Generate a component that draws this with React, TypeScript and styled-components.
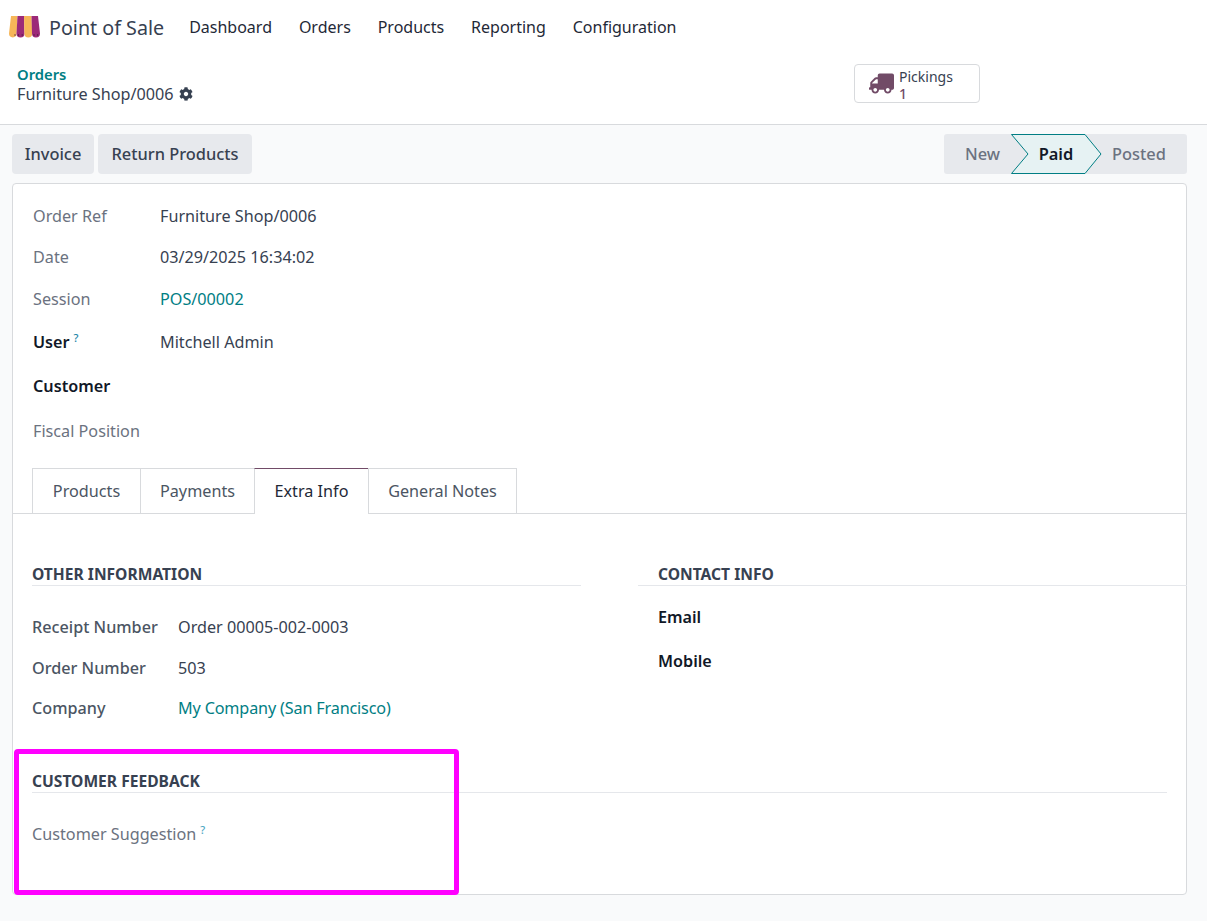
import React from "react";
import styled, { createGlobalStyle } from "styled-components";
import { FaCog, FaTruck } from "react-icons/fa";

const Global = createGlobalStyle`
  html, body { margin: 0; padding: 0; }
  body { background: #f9fafb; font-family: "Noto Sans", "Open Sans", sans-serif; font-size: 16.2px; color: #374151; }
`;
const Page = styled.div`position: relative; width: 1207px; height: 921px; overflow: hidden;`;
const Navbar = styled.nav`display: flex; align-items: center; height: 54px; padding-left: 9px; background: #fff;`;
const Brand = styled.div`display: flex; align-items: center; gap: 7px; font-size: 19.7px; color: #374151; margin-right: 25px;`;
const NavItems = styled.div`display: flex; gap: 26.9px;`;
const NavItem = styled.span`font-size: 16px; color: #1f2937;`;
const Panel = styled.div`display: flex; height: 70px; background: #fff; border-bottom: 1px solid #d8dadd; box-sizing: content-box;`;
const Crumbs = styled.div`width: 854px; padding: 11px 0 0 17px; box-sizing: border-box;`;
const CrumbLink = styled.div`font-size: 14.8px; line-height: 19px; font-weight: 600; color: #017e84;`;
const CrumbCurrent = styled.div`display: flex; align-items: center; gap: 5px; line-height: 20px; color: #374151;`;
const StatButton = styled.div`display: flex; align-items: center; gap: 5px; margin-top: 10px; width: 126px; height: 39px; padding-left: 14px; box-sizing: border-box; border: 1px solid #d8dadd; border-radius: 4px; background: #fff; color: #374151; font-size: 14px;`;
const StatText = styled.div`display: flex; flex-direction: column; margin-top: 2px;`;
const StatLabel = styled.span`display: block; height: 17px; line-height: 17px;`;
const StatValue = styled(StatLabel)`font-weight: 500; color: #714b67;`;
const ActionBar = styled.div`display: flex; justify-content: space-between; padding: 9px 20px 9px 12px;`;
const Actions = styled.div`display: flex; gap: 4px;`;
const ActionButton = styled.div<{ $w: number }>`width: ${p => p.$w}px; height: 40px; box-sizing: border-box; padding-bottom: 2px; display: flex; align-items: center; justify-content: center; background: #e7e9ed; border-radius: 4px; font-size: 16.4px; font-weight: 500; color: #374151;`;
const StatusBar = styled.div`display: flex; height: 40px; width: 243px; background: #e7e9ed; border-radius: 3px; font-weight: 500; font-size: 16.4px; color: #6b7280;`;
const Step = styled.div<{ $w: number; $active?: boolean; $padL?: number; $padR?: number }>`position: relative; width: ${p => p.$w}px; box-sizing: border-box; padding: 0 ${p => p.$padR ?? 0}px 2px ${p => p.$padL ?? 0}px; display: flex; align-items: center; justify-content: center; color: ${p => p.$active ? "#111827" : "#6b7280"}; font-weight: ${p => p.$active ? 600 : 500};`;
const StepLabel = styled.span`position: relative;`;
const StepShape = styled.svg`position: absolute; left: 0; top: 0;`;
const Sheet = styled.div`margin: 0 20px 0 12px; height: 712px; box-sizing: border-box; background: #fff; border: 1px solid #d8dadd; border-radius: 4px;`;
const Header = styled.div`padding: 11px 20px 0;`;
const Row = styled.div<{ $h: number }>`display: flex; align-items: center; height: ${p => p.$h}px;`;
const Label = styled.div<{ $w?: number; $strong?: boolean; $bold?: boolean }>`width: ${p => p.$w ?? 127}px; flex: none; color: ${p => p.$strong ? "#111827" : p.$bold ? "#4b5563" : "#6b7280"}; font-weight: ${p => p.$strong ? 600 : p.$bold ? 500 : 400};`;
const Help = styled.sup<{ $light?: boolean }>`font-size: 11px; font-weight: 500; color: ${p => p.$light ? "#4fa8c4" : "#1b84a8"}; margin-left: 4px; vertical-align: 6px; line-height: 0;`;
const Value = styled.div`color: #374151;`;
const ValueLink = styled.div<{ $tight?: boolean }>`color: #017e84; letter-spacing: ${p => p.$tight ? "-0.16px" : "0"};`;
const Tabs = styled.div`display: flex; margin-top: 15px; padding-left: 20px; height: 46px; box-sizing: border-box; border-bottom: 1px solid #d8dadd;`;
const Tab = styled.div<{ $w: number; $active?: boolean }>`width: ${p => p.$w}px; height: ${p => p.$active ? 46 : 45}px; padding-bottom: ${p => p.$active ? 1 : 0}px; box-sizing: border-box; display: flex; align-items: center; justify-content: center; background: #fff; margin-left: -1px; border: 1px solid #d8dadd; border-bottom: none; border-top-color: ${p => p.$active ? "#714b67" : "#d8dadd"}; color: ${p => p.$active ? "#1f2937" : "#4b5563"};`;
const Columns = styled.div`display: grid; grid-template-columns: 549px 549px; column-gap: 57px; padding: 50px 0 0 19px;`;
const Group = styled.div``;
const Heading = styled.div<{ $indent?: number }>`font-size: 15.6px; font-weight: 700; color: #374151; text-transform: uppercase; line-height: 20px; padding: 0 0 1px ${p => p.$indent ?? 0}px; border-bottom: 1px solid #e5e7eb;`;
const GroupRows = styled.div<{ $top: number; $indent?: number }>`padding: ${p => p.$top}px 0 0 ${p => p.$indent ?? 0}px;`;
const Feedback = styled.div`margin: 43px 19px 0;`;
const Annotation = styled.div`position: absolute; left: 14px; top: 749px; width: 445px; height: 146px; box-sizing: border-box; border: 5px solid #ff00ff; border-radius: 4px;`;
const Logo = styled.svg`flex: none;`;

export default function App() {
  return (
    <Page>
      <Global />
      <Navbar>
        <Brand>
          <Logo width="33" height="22" viewBox="0 0 33 22">
            <path d="M2 0H8.5L7.6 17.6a3.8 3.8 0 0 1-7.6 0z" fill="#f6b658" />
            <path d="M8.5 0H15L15.5 17.6a4 4 0 0 1-8 0z" fill="#9c2a78" />
            <path d="M15 0H22.5L23.2 17.6a3.9 3.9 0 0 1-7.8 0z" fill="#f6b658" />
            <path d="M22.5 0H29L31 17.6a4 4 0 0 1-8 0z" fill="#9c2a78" />
            <g fill="#4a1d3f">
              <circle cx="6" cy="19" r="0.7" />
              <circle cx="9.5" cy="19" r="0.7" />
              <circle cx="13.2" cy="19" r="0.7" />
              <circle cx="25" cy="19" r="0.7" />
              <circle cx="28.6" cy="19" r="0.7" />
            </g>
          </Logo>
          Point of Sale
        </Brand>
        <NavItems>
          <NavItem>Dashboard</NavItem>
          <NavItem>Orders</NavItem>
          <NavItem>Products</NavItem>
          <NavItem>Reporting</NavItem>
          <NavItem>Configuration</NavItem>
        </NavItems>
      </Navbar>
      <Panel>
        <Crumbs>
          <CrumbLink>Orders</CrumbLink>
          <CrumbCurrent>Furniture Shop/0006 <FaCog size={14} color="#374151" /></CrumbCurrent>
        </Crumbs>
        <StatButton>
          <FaTruck size={25} color="#714b67" style={{ transform: "scaleX(-1)" }} />
          <StatText>
            <StatLabel>Pickings</StatLabel>
            <StatValue>1</StatValue>
          </StatText>
        </StatButton>
      </Panel>
      <ActionBar>
        <Actions>
          <ActionButton $w={82}>Invoice</ActionButton>
          <ActionButton $w={154}>Return Products</ActionButton>
        </Actions>
        <StatusBar>
          <Step $w={67} $padL={10}>New</Step>
          <Step $w={90} $active>
            <StepShape width="91" height="40" viewBox="0 0 91 40">
              <path d="M0.5 0.5H74L90 20L74 39.5H0.5L17 20Z" fill="#e6f2f3" stroke="#017e84" />
            </StepShape>
            <StepLabel>Paid</StepLabel>
          </Step>
          <Step $w={86} $padR={10}>Posted</Step>
        </StatusBar>
      </ActionBar>
      <Sheet>
        <Header>
          <Row $h={41}><Label>Order Ref</Label><Value>Furniture Shop/0006</Value></Row>
          <Row $h={41}><Label>Date</Label><Value>03/29/2025 16:34:02</Value></Row>
          <Row $h={43}><Label>Session</Label><ValueLink>POS/00002</ValueLink></Row>
          <Row $h={44}><Label $strong>User<Help>?</Help></Label><Value>Mitchell Admin</Value></Row>
          <Row $h={44}><Label $strong>Customer</Label></Row>
          <Row $h={45}><Label>Fiscal Position</Label></Row>
        </Header>
        <Tabs>
          <Tab $w={109}>Products</Tab>
          <Tab $w={115}>Payments</Tab>
          <Tab $w={115} $active>Extra Info</Tab>
          <Tab $w={149}>General Notes</Tab>
        </Tabs>
        <Columns>
          <Group>
            <Heading>Other Information</Heading>
            <GroupRows $top={20}>
              <Row $h={41}><Label $w={146} $bold>Receipt Number</Label><Value>Order 00005-002-0003</Value></Row>
              <Row $h={41}><Label $w={146} $bold>Order Number</Label><Value>503</Value></Row>
              <Row $h={40}><Label $w={146} $bold>Company</Label><ValueLink $tight>My Company (San Francisco)</ValueLink></Row>
            </GroupRows>
          </Group>
          <Group>
            <Heading $indent={20}>Contact Info</Heading>
            <GroupRows $top={9} $indent={20}>
              <Row $h={44}><Label $strong>Email</Label></Row>
              <Row $h={44}><Label $strong>Mobile</Label></Row>
            </GroupRows>
          </Group>
        </Columns>
        <Feedback>
          <Heading>Customer Feedback</Heading>
          <GroupRows $top={20}>
            <Row $h={41}><Label $w={300}>Customer Suggestion<Help $light>?</Help></Label></Row>
          </GroupRows>
        </Feedback>
      </Sheet>
      <Annotation />
    </Page>
  );
}
